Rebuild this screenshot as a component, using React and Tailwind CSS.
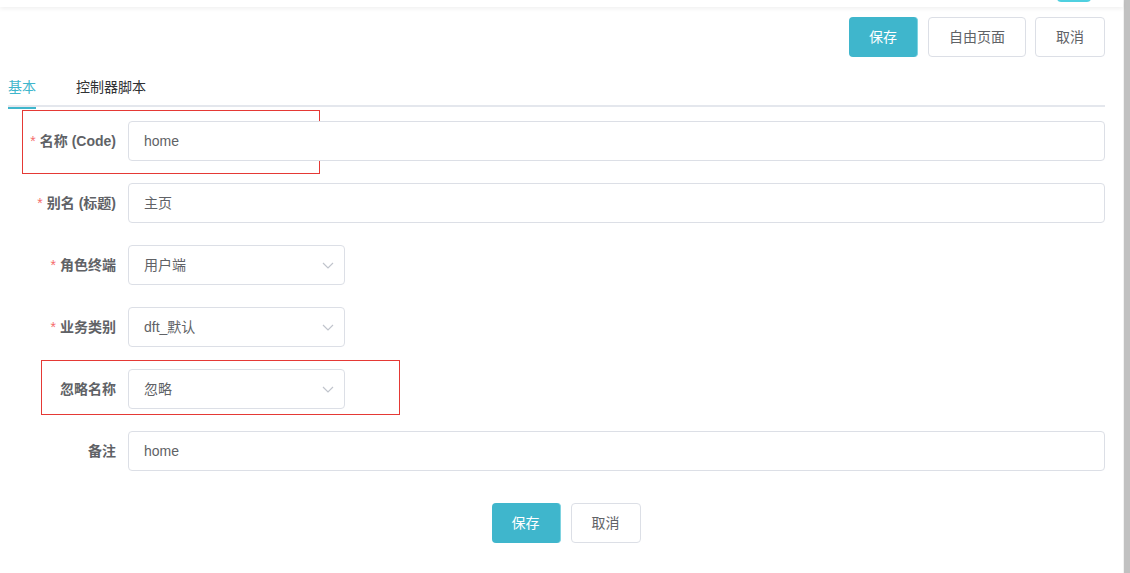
import React from 'react';

const font = { fontFamily: '"Liberation Sans", "Noto Sans CJK SC", sans-serif' };

const Chevron = () => (
  <svg width="14" height="14" viewBox="0 0 14 14" className="absolute right-[10px] top-1/2 -translate-y-1/2">
    <path d="M2 5 L7 10 L12 5" fill="none" stroke="#c0c4cc" strokeWidth="1.2" />
  </svg>
);

const Row = ({ label, required, value, select }) => (
  <div className="flex items-center mb-[22px]">
    <label className="w-[120px] pr-[12px] text-right text-[14px] font-bold text-[#606266] leading-[40px]">
      {required && <span className="text-[#f56c6c] font-normal mr-[4px]">*</span>}
      {label}
    </label>
    <div className={select ? 'relative w-[217px]' : 'relative flex-1'}>
      <div className="h-[40px] border border-[#dcdfe6] rounded-[4px] px-[15px] flex items-center text-[14px] text-[#606266] bg-white">
        {value}
      </div>
      {select && <Chevron />}
    </div>
  </div>
);

export default function App() {
  return (
    <div className="flex w-[1130px] h-[573px] bg-white overflow-hidden" style={font}>
      <div className="w-[1123px] flex flex-col">
        <div className="relative h-[7px] bg-white shadow-[0_2px_4px_rgba(0,0,0,0.06)]">
          <div className="absolute left-[1057px] top-[-6px] w-[34px] h-[8px] rounded-full bg-[#4fd0e0]" />
        </div>
        <div className="flex pl-[8px] pr-[18px] flex-1">
          <div className="flex-1 flex flex-col">
            <div className="flex justify-end mt-[10px]">
              <button className="h-[40px] w-[69px] rounded-[4px] bg-[#3fb6cc] border-r border-[#7fd3e0] text-white text-[14px]">保存</button>
              <button className="ml-[10px] h-[40px] w-[98px] rounded-[4px] border border-[#dcdfe6] bg-white text-[#606266] text-[14px]">自由页面</button>
              <button className="ml-[9px] h-[40px] w-[70px] rounded-[4px] border border-[#dcdfe6] bg-white text-[#606266] text-[14px]">取消</button>
            </div>
            <div className="mt-[10px] flex border-b-2 border-[#e4e7ed] h-[40px]">
              <div className="relative h-[40px] leading-[40px] text-[14px] text-[#3fb6cc] pr-[40px]">
                基本
                <div className="absolute left-0 bottom-[-2px] w-[28px] h-[2px] bg-[#3fb6cc]" />
              </div>
              <div className="h-[40px] leading-[40px] text-[14px] text-[#303133]">控制器脚本</div>
            </div>
            <div className="relative mt-[14px]">
              <div className="absolute left-[14px] top-[-11px] w-[298px] h-[64px] border border-[#e53935] pointer-events-none" />
              <div className="absolute left-[33px] top-[239px] w-[359px] h-[55px] border border-[#e53935] pointer-events-none" />
              <Row label="名称 (Code)" required value="home" />
              <Row label="别名 (标题)" required value="主页" />
              <Row label="角色终端" required value="用户端" select />
              <Row label="业务类别" required value="dft_默认" select />
              <Row label="忽略名称" value="忽略" select />
              <Row label="备注" value="home" />
              <div className="flex justify-center gap-[10px] pt-[10px] pl-[19px]">
                <button className="h-[40px] w-[69px] rounded-[4px] bg-[#3fb6cc] border-r border-[#7fd3e0] text-white text-[14px]">保存</button>
                <button className="h-[40px] w-[70px] rounded-[4px] border border-[#dcdfe6] bg-white text-[#606266] text-[14px]">取消</button>
              </div>
            </div>
          </div>
        </div>
      </div>
      <div className="w-[1px] bg-[#f1f1f1]" />
      <div className="w-[6px] bg-[#c1c1c1]" />
    </div>
  );
}
